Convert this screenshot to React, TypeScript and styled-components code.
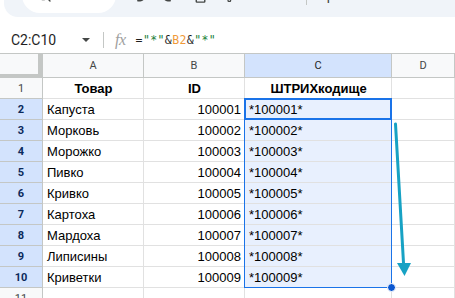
import * as React from 'react'
import styled, { createGlobalStyle } from 'styled-components'
import { Undo2, Redo2, Printer, PaintRoller, Search, ArrowLeft, ArrowRight } from 'lucide-react'

// column widths: row header, A, B, C, D
const COLS = [43, 101, 101, 147, 63]
const ROW_H = 21
const HEAD_H = 24

const GlobalStyle = createGlobalStyle`
    body {
        margin: 0;
        background: #ffffff;
        font-family: "Liberation Sans", Arial, sans-serif;
    }
`

// ---------------------------------------- [Page] ----------------------------------------
const Page = styled.div`
    width: 455px;
    height: 298px;
    overflow: hidden;
    background: #ffffff;
    display: flex;
    flex-direction: column;
`

// ---------------------------------------- [Toolbar] ----------------------------------------
const Toolbar = styled.div`
    height: 17px;
    flex: none;
    background: #f0f4f9;
    border-radius: 0 0 0 14px;
    overflow: hidden;
    margin-left: 4px;
`

const ToolRow = styled.div`
    display: flex;
    align-items: center;
    height: 40px;
    margin-top: -25px;
    gap: 14px;
    padding-left: 18px;
    color: #444746;
`

const SearchPill = styled.div`
    width: 98px;
    height: 36px;
    border-radius: 18px;
    background: #ffffff;
    display: flex;
    align-items: center;
    gap: 8px;
    padding-left: 14px;
    box-sizing: border-box;
    font-family: Roboto, "Liberation Sans", sans-serif;
    font-size: 14px;
    color: #444746;
`

const ToolText = styled.span`
    font-family: Roboto, "Liberation Sans", sans-serif;
    font-size: 14px;
    color: #444746;
`

const ToolSep = styled.div`
    width: 1px;
    height: 20px;
    background: #c4c7c5;
    margin: 0 6px;
`

const ToolGap = styled.span`
    width: 20px;
`

// ---------------------------------------- [Formula bar] ----------------------------------------
const FormulaBar = styled.div`
    height: 25px;
    margin-top: 10px;
    flex: none;
    display: flex;
    align-items: center;
    border-bottom: 1px solid #c4c7c5;
    padding-bottom: 1px;
`

const NameBox = styled.div`
    width: 92px;
    padding-left: 11px;
    display: flex;
    align-items: center;
    justify-content: space-between;
    font-family: Roboto, "Liberation Sans", sans-serif;
    font-size: 14px;
    color: #1f1f1f;
    box-sizing: border-box;
    padding-right: 2px;
`

const Caret = styled.span`
    width: 0;
    height: 0;
    border-left: 4px solid transparent;
    border-right: 4px solid transparent;
    border-top: 4px solid #444746;
`

const BarSep = styled.div`
    width: 1px;
    height: 16px;
    background: #c4c7c5;
    margin: 0 11px 0 11px;
`

const Fx = styled.span`
    font-family: "Liberation Serif", serif;
    font-style: italic;
    font-size: 16px;
    color: #a0a0a0;
    margin-right: 10px;
    letter-spacing: -0.5px;
`

const Formula = styled.span`
    font-family: "DejaVu Sans Mono", "Liberation Mono", monospace;
    font-size: 11.5px;
    letter-spacing: 0.4px;
    color: #1f1f1f;
`

const Tok = styled.span<{ $kind: 'str' | 'ref' }>`
    color: ${p => (p.$kind === 'str' ? '#188038' : '#f09a3a')};
`

// ---------------------------------------- [Grid] ----------------------------------------
const GridWrap = styled.div`
    position: relative;
    flex: none;
`

const Row = styled.div<{ $h: number }>`
    display: flex;
    height: ${p => p.$h}px;
`

const Corner = styled.div`
    width: ${COLS[0]}px;
    box-sizing: border-box;
    background: #f8f9fa;
    border-right: 5px solid #c4c7c5;
    border-bottom: 4px solid #c4c7c5;
`

const ColHead = styled.div<{ $w: number; $sel?: boolean }>`
    width: ${p => p.$w}px;
    flex: none;
    box-sizing: border-box;
    display: flex;
    align-items: center;
    justify-content: center;
    background: ${p => (p.$sel ? '#d3e3fd' : '#f8f9fa')};
    border-right: 1px solid #c4c7c5;
    border-bottom: 1px solid #c4c7c5;
    font-family: Roboto, "Liberation Sans", sans-serif;
    font-size: 11px;
    color: ${p => (p.$sel ? '#1f1f1f' : '#444746')};
`

const RowHead = styled.div<{ $sel?: boolean }>`
    width: ${COLS[0]}px;
    flex: none;
    box-sizing: border-box;
    display: flex;
    align-items: center;
    justify-content: center;
    background: ${p => (p.$sel ? '#d3e3fd' : '#f8f9fa')};
    border-right: 1px solid #c4c7c5;
    border-bottom: 1px solid #c4c7c5;
    font-family: Roboto, "Liberation Sans", sans-serif;
    font-size: 11px;
    font-weight: ${p => (p.$sel ? 700 : 400)};
    color: ${p => (p.$sel ? '#0b2a5c' : '#444746')};
`

const Cell = styled.div<{ $w: number; $align?: 'left' | 'right' | 'center'; $bold?: boolean; $sel?: boolean }>`
    width: ${p => p.$w}px;
    flex: none;
    box-sizing: border-box;
    padding: 0 3px 0 4px;
    display: flex;
    align-items: center;
    justify-content: ${p => (p.$align === 'right' ? 'flex-end' : p.$align === 'center' ? 'center' : 'flex-start')};
    background: ${p => (p.$sel ? '#e8f0fe' : '#ffffff')};
    border-right: 1px solid #e1e1e1;
    border-bottom: 1px solid #e1e1e1;
    font-size: 13px;
    font-weight: ${p => (p.$bold ? 700 : 400)};
    color: #000000;
    white-space: nowrap;
    overflow: hidden;
`

const RangeBox = styled.div`
    position: absolute;
    left: ${COLS[0] + COLS[1] + COLS[2] - 1}px;
    top: ${HEAD_H + ROW_H - 1}px;
    width: ${COLS[3] + 1}px;
    height: ${ROW_H * 9 + 1}px;
    box-sizing: border-box;
    border: 1px solid #1a73e8;
    pointer-events: none;
`

const ActiveCell = styled.div`
    position: absolute;
    left: -1px;
    top: -1px;
    width: ${COLS[3] + 1}px;
    height: ${ROW_H + 1}px;
    box-sizing: border-box;
    border: 2px solid #1a73e8;
`

const Handle = styled.div`
    position: absolute;
    right: -5px;
    bottom: -5px;
    width: 9px;
    height: 9px;
    border-radius: 50%;
    background: #0b57d0;
    border: 1px solid #ffffff;
    box-sizing: border-box;
`

const ArrowLayer = styled.svg`
    position: absolute;
    left: 0;
    top: 0;
    pointer-events: none;
`

const products = ['Капуста', 'Морковь', 'Морожко', 'Пивко', 'Кривко', 'Картоха', 'Мардоха', 'Липисины', 'Криветки']

export default function App() {
    const gridTop = 53
    return (
        <Page>
            <GlobalStyle />
            <Toolbar>
                <ToolRow>
                    <SearchPill>
                        <Search size={16} />
                        Меню
                    </SearchPill>
                    <Undo2 size={18} />
                    <Redo2 size={18} />
                    <Printer size={18} />
                    <PaintRoller size={16} />
                    <ToolText>100%</ToolText>
                    <ToolSep />
                    <ToolText>р.</ToolText>
                    <ToolText>.0</ToolText>
                    <ToolGap />
                    <ArrowLeft size={16} />
                    <ArrowRight size={16} />
                </ToolRow>
            </Toolbar>

            <FormulaBar>
                <NameBox>
                    C2:C10
                    <Caret />
                </NameBox>
                <BarSep />
                <Fx>fx</Fx>
                <Formula>
                    =<Tok $kind="str">"*"</Tok>&amp;<Tok $kind="ref">B2</Tok>&amp;<Tok $kind="str">"*"</Tok>
                </Formula>
            </FormulaBar>

            <GridWrap>
                <Row $h={HEAD_H}>
                    <Corner />
                    <ColHead $w={COLS[1]}>A</ColHead>
                    <ColHead $w={COLS[2]}>B</ColHead>
                    <ColHead $w={COLS[3]} $sel>C</ColHead>
                    <ColHead $w={COLS[4]}>D</ColHead>
                </Row>
                <Row $h={ROW_H}>
                    <RowHead>1</RowHead>
                    <Cell $w={COLS[1]} $align="center" $bold>Товар</Cell>
                    <Cell $w={COLS[2]} $align="center" $bold>ID</Cell>
                    <Cell $w={COLS[3]} $align="center" $bold>ШТРИХкодище</Cell>
                    <Cell $w={COLS[4]} />
                </Row>
                {products.map((name, i) => {
                    const id = 100001 + i
                    return (
                        <Row $h={ROW_H} key={'row' + i}>
                            <RowHead $sel>{i + 2}</RowHead>
                            <Cell $w={COLS[1]}>{name}</Cell>
                            <Cell $w={COLS[2]} $align="right">{id}</Cell>
                            <Cell $w={COLS[3]} $sel>*{id}*</Cell>
                            <Cell $w={COLS[4]} />
                        </Row>
                    )
                })}
                <Row $h={ROW_H}>
                    <RowHead>11</RowHead>
                    <Cell $w={COLS[1]} />
                    <Cell $w={COLS[2]} />
                    <Cell $w={COLS[3]} />
                    <Cell $w={COLS[4]} />
                </Row>

                <RangeBox>
                    <ActiveCell />
                    <Handle />
                </RangeBox>

                <ArrowLayer width={455} height={245}>
                    <line x1={395.5} y1={123 - gridTop} x2={403.5} y2={262 - gridTop} stroke="#17a2c4" strokeWidth={3} strokeLinecap="round" />
                    <polygon points={`397,${262 - gridTop} 411,${262 - gridTop} 404.5,${275 - gridTop}`} fill="#17a2c4" />
                </ArrowLayer>
            </GridWrap>
        </Page>
    )
}
